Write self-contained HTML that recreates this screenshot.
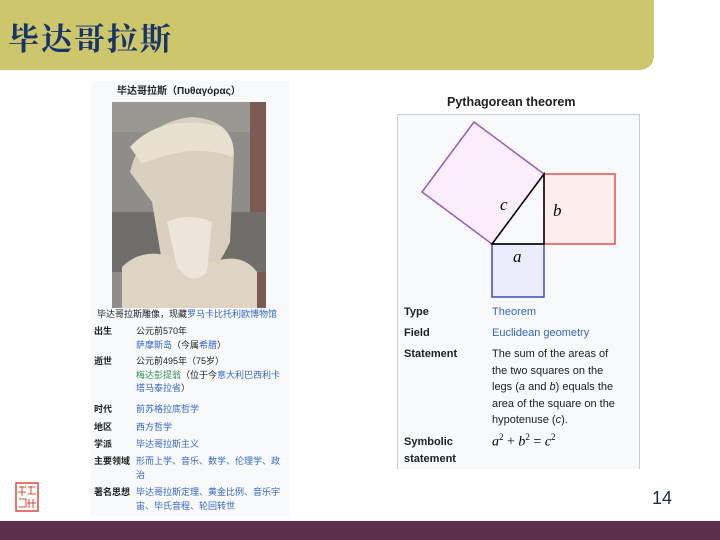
<!DOCTYPE html>
<html><head><meta charset="utf-8"><style>
body{margin:0;width:720px;height:540px;position:relative;overflow:hidden;background:#fff;font-family:"Liberation Sans","Noto Sans CJK SC",sans-serif}
.a{position:absolute;white-space:nowrap}
.hd{left:0;top:0;width:654px;height:70px;background:#cdc66a;border-radius:0 0 14px 0}
.tt{left:8px;top:14px;font-size:31px;color:#17356a;font-family:"Noto Serif CJK SC",serif;font-weight:bold;letter-spacing:2px}
.ib{left:91px;top:81px;width:198px;height:435px;background:#f8f9fa}
.s{font-size:9px;color:#202122;line-height:13.5px}
.l{color:#3366cc!important}.g{color:#3a8f5a}
.b{font-weight:bold}
.r{font-size:11px;color:#202122}
</style></head><body>
<div class="a hd"></div>
<div class="a tt">毕达哥拉斯</div>
<div class="a ib"></div>
<div class="a s b" style="left:117px;top:85px;font-size:10px">毕达哥拉斯（Πυθαγόρας）</div>
<svg class="a" style="left:112px;top:102px" width="154" height="206" viewBox="0 0 154 206">
<rect width="154" height="206" fill="#8e8d8a"/>
<rect x="0" y="0" width="140" height="30" fill="#9a9893"/>
<rect x="138" y="0" width="16" height="206" fill="#7a5a52"/>
<rect x="0" y="110" width="154" height="60" fill="#6f6e6a"/>
<path d="M18 70 Q30 20 80 15 Q120 18 122 50 L118 140 Q105 170 80 185 Q60 170 50 160 L40 100 Z" fill="#d9d0bf"/>
<path d="M18 45 Q50 10 110 25 Q125 40 120 55 Q80 40 30 62 Z" fill="#e8e0d0"/>
<path d="M10 165 Q30 145 60 155 L100 160 Q130 150 145 170 L145 206 L10 206 Z" fill="#ddd4c2"/>
<path d="M55 120 Q75 110 100 120 L95 170 Q80 185 65 165 Z" fill="#ece6da"/>
</svg>
<div class="a s" style="left:97px;top:308px">毕达哥拉斯雕像，现藏<span class="l">罗马卡比托利欧博物馆</span></div>
<div class="a s b" style="left:94px;top:325px">出生</div>
<div class="a s" style="left:136px;top:325px">公元前570年<br><span class="l">萨摩斯岛</span>（今属<span class="l">希腊</span>）</div>
<div class="a s b" style="left:94px;top:355px">逝世</div>
<div class="a s" style="left:136px;top:355px">公元前495年（75岁）<br><span class="g">梅达彭提翁</span>（位于今<span class="l">意大利巴西利卡</span><br><span class="l">塔马泰拉省</span>）</div>
<div class="a s b" style="left:94px;top:403px">时代</div><div class="a s l" style="left:136px;top:403px">前苏格拉底哲学</div>
<div class="a s b" style="left:94px;top:421px">地区</div><div class="a s l" style="left:136px;top:421px">西方哲学</div>
<div class="a s b" style="left:94px;top:438px">学派</div><div class="a s l" style="left:136px;top:438px">毕达哥拉斯主义</div>
<div class="a s b" style="left:94px;top:455px">主要领域</div><div class="a s l" style="left:136px;top:455px">形而上学、音乐、数学、伦理学、政<br>治</div>
<div class="a s b" style="left:94px;top:486px">著名思想</div><div class="a s l" style="left:136px;top:486px">毕达哥拉斯定理、黄金比例、音乐宇<br>宙、毕氏音程、轮回转世</div>

<div class="a b" style="left:447px;top:95px;font-size:12.5px;color:#202122">Pythagorean theorem</div>
<div class="a" style="left:397px;top:114px;width:241px;height:354px;background:#f8f9fa;border:1px solid #c8ccd1;border-bottom:none"></div>
<svg class="a" style="left:0;top:0" width="720" height="540">
<polygon points="492,244 544,174 474,122 422,192" fill="#fbeefc" stroke="#9b59b6" stroke-width="1.5"/>
<rect x="544" y="174" width="71" height="70" fill="#fdeeee" stroke="#e0524b" stroke-width="1.5"/>
<rect x="492" y="244" width="52" height="53" fill="#ececfb" stroke="#3d4db7" stroke-width="1.5"/>
<polygon points="492,244 544,244 544,174" fill="none" stroke="#000" stroke-width="1.5"/>
<text x="500" y="210" font-family="Liberation Serif" font-style="italic" font-size="17">c</text>
<text x="553" y="216" font-family="Liberation Serif" font-style="italic" font-size="17">b</text>
<text x="513" y="262" font-family="Liberation Serif" font-style="italic" font-size="17">a</text>
</svg>
<div class="a r b" style="left:404px;top:306px">Type</div><div class="a r l" style="left:492px;top:306px">Theorem</div>
<div class="a r b" style="left:404px;top:327px">Field</div><div class="a r l" style="left:492px;top:327px">Euclidean geometry</div>
<div class="a r b" style="left:404px;top:348px">Statement</div>
<div class="a r" style="left:492px;top:346px;line-height:16.6px">The sum of the areas of<br>the two squares on the<br>legs (<i>a</i> and <i>b</i>) equals the<br>area of the square on the<br>hypotenuse (<i>c</i>).</div>
<div class="a r b" style="left:404px;top:434px;line-height:17px">Symbolic<br>statement</div>
<div class="a" style="left:492px;top:432px;font-family:'Liberation Serif',serif;font-size:14px;font-style:italic">a<sup style="font-size:9px;font-style:normal">2</sup> <span style="font-style:normal">+</span> b<sup style="font-size:9px;font-style:normal">2</sup> <span style="font-style:normal">=</span> c<sup style="font-size:9px;font-style:normal">2</sup></div>

<svg class="a" style="left:15px;top:482px" width="24" height="30"><rect x="1" y="1" width="22" height="28" fill="#fff" stroke="#e04a3a" stroke-width="1.5"/><path d="M4 5h7M7 4v10M3 10h8M13 5h7M16 4v8M13 12h8M4 17h7v8H4M14 17v9M18 17v9M12 21h9" stroke="#e04a3a" fill="none"/></svg>
<div class="a" style="left:652px;top:488px;font-size:18px;color:#1b2a4a">14</div>
<div class="a" style="left:0;top:521px;width:720px;height:19px;background:#5c2f4a"></div>
</body></html>
